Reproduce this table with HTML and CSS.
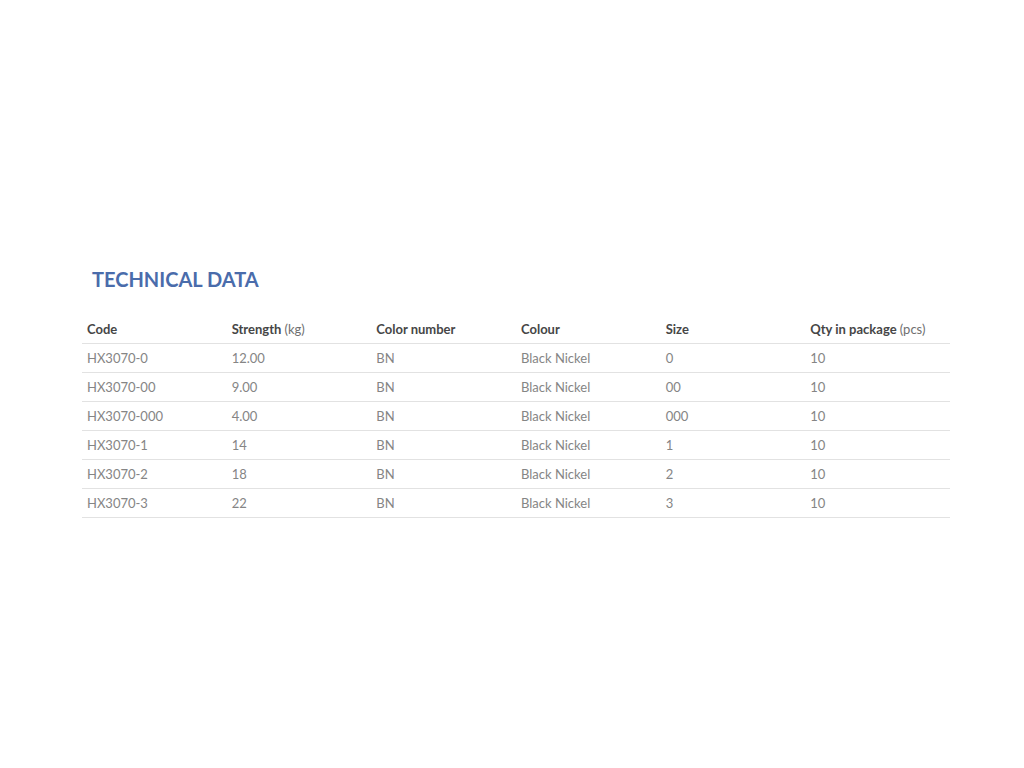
FILE: index.html
```html
<!DOCTYPE html>
<html>
<head>
<meta charset="utf-8">
<link rel="stylesheet" href="styles.css">
</head>
<body>
<section class="tech">
  <h2 class="tech-title">TECHNICAL DATA</h2>
  <table class="tech-table">
    <thead>
      <tr>
        <th>Code</th>
        <th>Strength <span class="unit">(kg)</span></th>
        <th>Color number</th>
        <th>Colour</th>
        <th>Size</th>
        <th>Qty in package <span class="unit">(pcs)</span></th>
      </tr>
    </thead>
    <tbody>
      <tr><td>HX3070-0</td><td>12.00</td><td>BN</td><td>Black Nickel</td><td>0</td><td>10</td></tr>
      <tr><td>HX3070-00</td><td>9.00</td><td>BN</td><td>Black Nickel</td><td>00</td><td>10</td></tr>
      <tr><td>HX3070-000</td><td>4.00</td><td>BN</td><td>Black Nickel</td><td>000</td><td>10</td></tr>
      <tr><td>HX3070-1</td><td>14</td><td>BN</td><td>Black Nickel</td><td>1</td><td>10</td></tr>
      <tr><td>HX3070-2</td><td>18</td><td>BN</td><td>Black Nickel</td><td>2</td><td>10</td></tr>
      <tr><td>HX3070-3</td><td>22</td><td>BN</td><td>Black Nickel</td><td>3</td><td>10</td></tr>
    </tbody>
  </table>
</section>
</body>
</html>
```

FILE: styles.css
```css
html, body {
  margin: 0;
  padding: 0;
  background: #ffffff;
}

body {
  font-family: Lato, "Open Sans", sans-serif;
}

.tech {
  width: 868px;
  margin-left: 82px;
  padding-top: 267px;
}

.tech-title {
  margin: 0 0 24px 0;
  padding-left: 10px;
  font-size: 20px;
  line-height: 24px;
  font-weight: 700;
  color: #4a6cab;
}

.tech-table {
  width: 100%;
  border-collapse: collapse;
  table-layout: fixed;
  font-size: 13px;
}

.tech-table th,
.tech-table td {
  height: 28px;
  padding: 0 5px;
  text-align: left;
  vertical-align: middle;
  border-bottom: 1px solid #e2e2e2;
}

.tech-table th {
  font-weight: 700;
  color: #464646;
}

.tech-table th .unit {
  font-weight: 400;
  color: #707070;
}

.tech-table td {
  font-weight: 400;
  color: #858585;
}
```
